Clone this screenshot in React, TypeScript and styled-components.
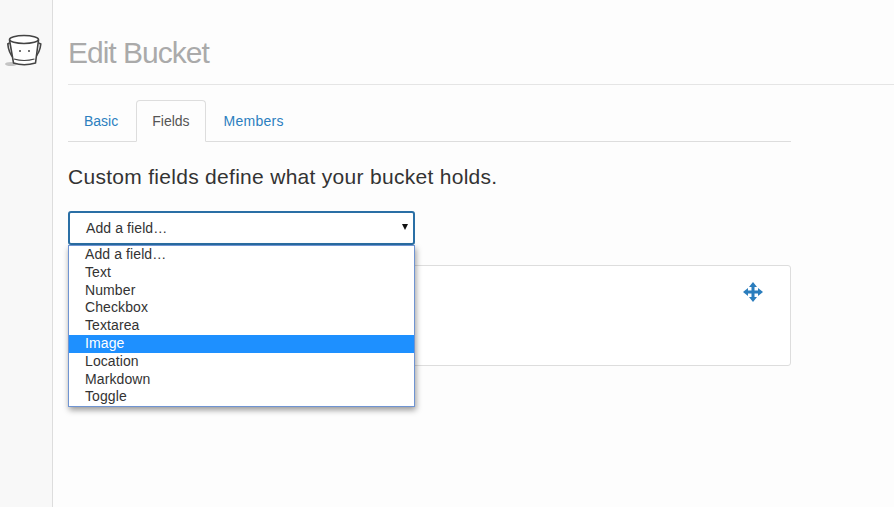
import React from "react"
import styled, { createGlobalStyle } from "styled-components"

const FIELD_TYPES = ["Add a field…", "Text", "Number", "Checkbox", "Textarea", "Image", "Location", "Markdown", "Toggle"]

export default function App() {
	return (
		<>
			<GlobalStyle />
			<Page>
				<Sidebar>
					<BucketLogo />
				</Sidebar>
				<Main>
					<Title>Edit Bucket</Title>
					<Content>
						<Tabs>
							<Tab>Basic</Tab>
							<Tab $active>Fields</Tab>
							<Tab $spacing={0.25}>Members</Tab>
						</Tabs>
						<Lead>Custom fields define what your bucket holds.</Lead>
						<SelectWrap>
							<SelectBox>
								Add a field…
								<Caret />
							</SelectBox>
							<DropList>
								{FIELD_TYPES.map((name) => (
									<DropItem key={name} $selected={name === "Image"}>
										{name}
									</DropItem>
								))}
							</DropList>
						</SelectWrap>
						<FieldCard>
							<MoveIcon />
						</FieldCard>
					</Content>
				</Main>
			</Page>
		</>
	)
}

function BucketLogo() {
	return (
		<LogoSvg width="40" height="36" viewBox="0 0 40 36" fill="none" stroke="#444" strokeWidth="1.6">
			<ellipse cx="7" cy="31" rx="6" ry="2" fill="#c4c4c4" stroke="none" />
			<path d="M5.500 10 L3.800 11 Q4.500 20 10 25.500" />
			<path d="M34.500 10 L36.800 11 Q36 20 30 25.500" />
			<path d="M5.500 7 L9.500 30 Q20 33.500 31.500 30 L34.500 7" fill="#fff" />
			<ellipse cx="20" cy="6.500" rx="14.500" ry="4" fill="#fff" />
			<path d="M10 26 Q20 29 30.500 26" strokeWidth="1.200" />
			<circle cx="16" cy="18" r="1" fill="#444" stroke="none" />
			<circle cx="25" cy="18" r="1" fill="#444" stroke="none" />
		</LogoSvg>
	)
}

function MoveIcon() {
	return (
		<MoveSvg width="22" height="22" viewBox="0 0 22 22" fill="#2b7dbd">
			<path d="M11 1 L15 6 L12.500 6 L12.500 9.500 L16 9.500 L16 7 L21 11 L16 15 L16 12.500 L12.500 12.500 L12.500 16 L15 16 L11 21 L7 16 L9.500 16 L9.500 12.500 L6 12.500 L6 15 L1 11 L6 7 L6 9.500 L9.500 9.500 L9.500 6 L7 6 Z" />
		</MoveSvg>
	)
}

// 〓〓〓〓〓〓〓〓〓〓〓〓〓〓〓〓〓〓〓〓〓〓〓〓〓〓〓〓〓〓	STYLED_COMPONENTS

const GlobalStyle = createGlobalStyle`
	html, body {
		margin: 0;
		padding: 0;
		background: #fdfdfd;
		font-family: "Liberation Sans", Arial, sans-serif;
		font-size: 14px;
		color: #333;
	}
	* {
		box-sizing: border-box;
	}
`

const Page = styled.div`
	display: flex;
	height: 507px;
	overflow: hidden;
`

const Sidebar = styled.aside`
	flex: 0 0 53px;
	background: #f8f8f8;
	border-right: 1px solid #ddd;
	padding: 33px 0 0 4px;
`

const LogoSvg = styled.svg`
	display: block;
`

const Main = styled.main`
	flex: 1;
	padding: 0 0 0 15px;
`

const Title = styled.h1`
	margin: 0;
	height: 85px;
	padding-top: 35px;
	border-bottom: 1px solid #e5e5e5;
	font-size: 30px;
	line-height: 36px;
	font-weight: 400;
	letter-spacing: -1px;
	color: #aaa;
`

const Content = styled.div`
	width: 723px;
	padding-top: 15px;
`

const Tabs = styled.nav`
	display: flex;
	gap: 2px;
	height: 42px;
	border-bottom: 1px solid #ddd;
`

const Tab = styled.a<{ $active?: boolean; $spacing?: number }>`
	height: 42px;
	padding: 10px 15px;
	line-height: 20px;
	letter-spacing: ${(p) => p.$spacing ?? 0}px;
	border: 1px solid ${(p) => (p.$active ? "#ddd" : "transparent")};
	border-bottom-color: ${(p) => (p.$active ? "#fdfdfd" : "transparent")};
	border-radius: 4px 4px 0 0;
	color: ${(p) => (p.$active ? "#555" : "#2c7fbf")};
`

const Lead = styled.p`
	margin: 22px 0 0;
	font-size: 21px;
	line-height: 26px;
	letter-spacing: 0.29px;
	color: #333;
`

const SelectWrap = styled.div`
	position: relative;
	width: 347px;
	margin-top: 21px;
`

const SelectBox = styled.div`
	position: relative;
	height: 34px;
	padding: 5px 16px;
	line-height: 20px;
	letter-spacing: 0.1px;
	background: #fff;
	border: 2px solid #2a6fa5;
	border-radius: 3px;
	color: #333;
`

const Caret = styled.span`
	position: absolute;
	top: 11px;
	right: 5px;
	border-left: 3.5px solid transparent;
	border-right: 3.5px solid transparent;
	border-top: 6px solid #111;
`

const DropList = styled.ul`
	position: absolute;
	top: 34px;
	left: 0;
	width: 347px;
	height: 162px;
	margin: 0;
	padding: 0;
	list-style: none;
	background: #fff;
	border: 1px solid #6f94d2;
	box-shadow: 1px 3px 6px rgba(0, 0, 0, 0.4);
	z-index: 2;
`

const DropItem = styled.li<{ $selected?: boolean }>`
	height: 17.8px;
	padding-left: 16px;
	line-height: 17.8px;
	letter-spacing: 0.1px;
	background: ${(p) => (p.$selected ? "#1e90ff" : "transparent")};
	color: ${(p) => (p.$selected ? "#fff" : "#333")};
`

const FieldCard = styled.section`
	display: flex;
	justify-content: flex-end;
	align-items: flex-start;
	height: 101px;
	margin-top: 20px;
	padding: 15px 26px;
	background: #fff;
	border: 1px solid #ddd;
	border-radius: 3px;
`

const MoveSvg = styled.svg`
	display: block;
`
